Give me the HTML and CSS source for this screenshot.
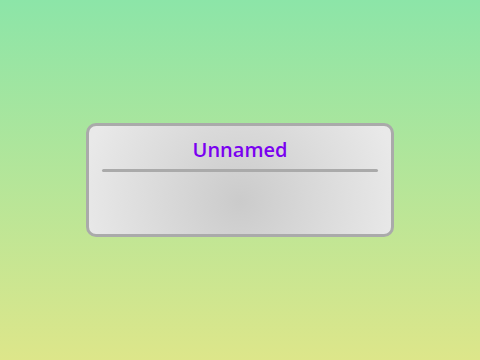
FILE: index.html
```html
<!DOCTYPE html>
<html lang="en">
<head>
<meta charset="UTF-8" />
<meta name="viewport" content="width=device-width, initial-scale=1" />
<title>Unnamed</title>
<link rel="stylesheet" href="styles.css">
</head>
<body>
  <div class="card">
    <h1 class="card-title">Unnamed</h1>
    <div class="card-rule"></div>
    <div class="card-body"></div>
  </div>
</body>
</html>
```
FILE: styles.css
```css
body, html {
  margin: 0; padding: 0; height: 100%;
  font-family: "Open Sans", "Noto Sans", sans-serif;
}
body {
  display: flex;
  align-items: center;
  justify-content: center;
  background: linear-gradient(to bottom, #8ce5a8, #dde68a);
}

.card {
  box-sizing: border-box;
  width: 308px;
  height: 114px;
  border: 3px solid #aaa;
  border-radius: 10px;
  background: radial-gradient(circle at 50% 70%, #cbcbcb 0%, #e9e9e9 160px);
  padding: 10px 13px 0;
}

.card-title {
  margin: 0;
  text-align: center;
  color: #7a00f0;
  font-size: 20px;
  font-weight: 600;
  line-height: 28px;
}

.card-rule {
  height: 3px;
  background: #aaa;
  border-radius: 2px;
  margin-top: 5px;
}
```
